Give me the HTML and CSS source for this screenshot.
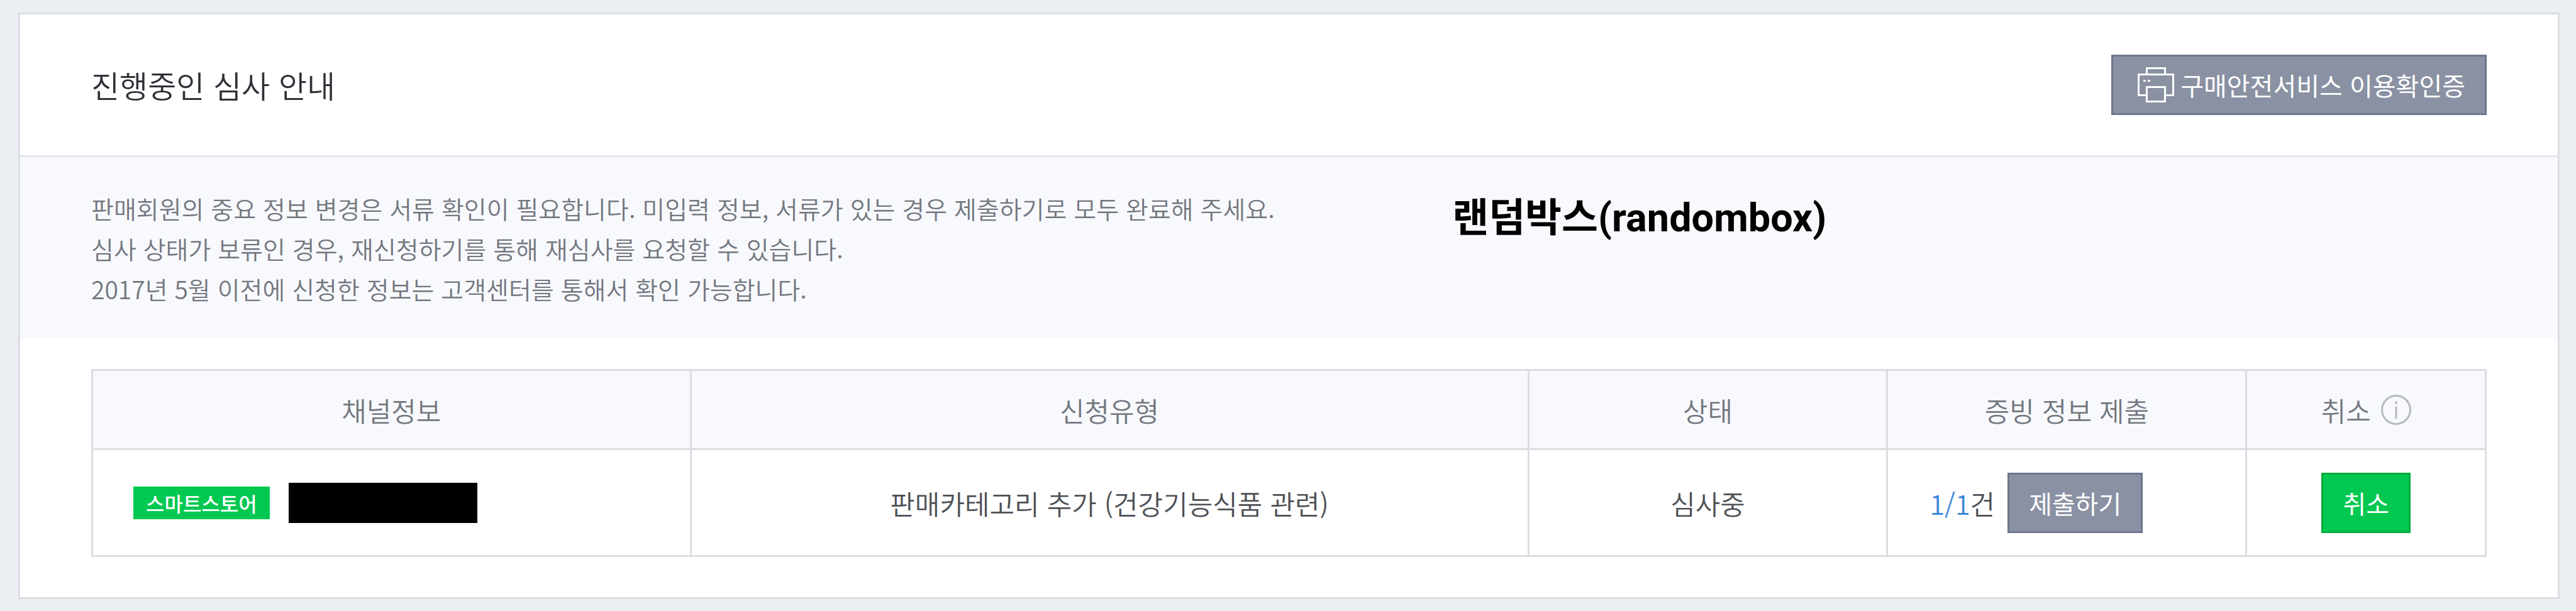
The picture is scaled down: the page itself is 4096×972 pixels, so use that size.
FILE: index.html
```html
<!DOCTYPE html>
<html lang="ko">

<head>
    <meta charset="UTF-8">
    <meta name="viewport" content="width=device-width, initial-scale=1.0">
    <title>진행중인 심사 안내</title>
    <link rel="stylesheet" href="styles.css">
</head>

<body>
    <main class="panel">
        <header class="panel-header">
            <h1 class="panel-title">진행중인 심사 안내</h1>
            <button type="button" class="btn btn-gray">
                <svg class="icon-print" viewBox="0 0 58 56" aria-hidden="true">
                    <path d="M14.5 11.500V1.500H43.500V11.500M14.500 44.500H1.500V11.500H56.500V44.500H43.500M14.500 31.500H43.500V54.500H14.500Z" />
                    <path d="M9 21.500H13M16 21.500H20" />
                </svg>
                구매안전서비스 이용확인증
            </button>
        </header>

        <section class="info">
            <div class="info-text">
                <p>판매회원의 중요 정보 변경은 서류 확인이 필요합니다. 미입력 정보, 서류가 있는 경우 제출하기로 모두 완료해 주세요.</p>
                <p>심사 상태가 보류인 경우, 재신청하기를 통해 재심사를 요청할 수 있습니다.</p>
                <p>2017년 5월 이전에 신청한 정보는 고객센터를 통해서 확인 가능합니다.</p>
            </div>
            <strong class="info-note">랜덤박스(randombox)</strong>
        </section>

        <div class="table-wrap">
            <table class="review-table">
                <colgroup>
                    <col class="col-channel">
                    <col class="col-type">
                    <col class="col-status">
                    <col class="col-submit">
                    <col class="col-cancel">
                </colgroup>
                <thead>
                    <tr>
                        <th scope="col">채널정보</th>
                        <th scope="col">신청유형</th>
                        <th scope="col">상태</th>
                        <th scope="col">증빙 정보 제출</th>
                        <th scope="col">
                            <div class="th-help">
                                취소
                                <svg class="icon-info" viewBox="0 0 48 48" aria-hidden="true">
                                    <circle cx="24" cy="24" r="22.500" />
                                    <path d="M24 10V15M24 19V38" />
                                </svg>
                            </div>
                        </th>
                    </tr>
                </thead>
                <tbody>
                    <tr>
                        <td>
                            <div class="channel">
                                <span class="badge">스마트스토어</span>
                                <span class="masked"></span>
                            </div>
                        </td>
                        <td>판매카테고리 추가 (건강기능식품 관련)</td>
                        <td>심사중</td>
                        <td>
                            <div class="submit">
                                <span><span class="count">1/1</span>건</span>
                                <button type="button" class="btn btn-gray">제출하기</button>
                            </div>
                        </td>
                        <td><button type="button" class="btn btn-green">취소</button></td>
                    </tr>
                </tbody>
            </table>
        </div>
    </main>
</body>

</html>
```

FILE: styles.css
```css
* {
    margin: 0;
    padding: 0;
    box-sizing: border-box;
}

body {
    font-family: "Noto Sans CJK KR", sans-serif;
    font-size: 43px;
    font-weight: 400;
    background: #ebeff4;
    color: #4d5055;
    padding: 20px 26px 20px 29px;
}

.panel {
    background: #fff;
    border: 3px solid #dbdde2;
}

.panel-header {
    display: flex;
    justify-content: space-between;
    align-items: center;
    padding: 64px 113px;
    border-bottom: 3px solid #e1e5ec;
}

.panel-title {
    font-size: 49px;
    font-weight: 350;
    line-height: 64px;
    color: #303038;
}

.btn {
    display: inline-flex;
    align-items: center;
    height: 96px;
    padding: 0 31px;
    border: 3px solid;
    font-family: inherit;
    font-size: 40px;
    font-weight: 400;
    color: #fff;
    white-space: nowrap;
    cursor: pointer;
}

.btn-gray {
    background: #8a91a3;
    border-color: #6d768d;
}

.btn-green {
    background: #00c850;
    border-color: #00ab3e;
}

.icon-print {
    width: 58px;
    height: 56px;
    margin: 0 10px 0 8px;
    fill: none;
    stroke: #fff;
    stroke-width: 3;
}

.info {
    display: grid;
    grid-template-columns: 25fr 19fr;
    padding: 49px 113px 48px;
    background: #f8f9fd;
}

.info-text {
    font-size: 39px;
    font-weight: 350;
    line-height: 64px;
    color: #73777f;
}

.info-note {
    font-family: Roboto, "Noto Sans CJK KR", sans-serif;
    font-size: 63px;
    font-weight: 700;
    line-height: 96px;
    color: #000;
}

.table-wrap {
    padding: 48px 113px 64px;
}

.review-table {
    width: 100%;
    table-layout: fixed;
    border-collapse: collapse;
    font-weight: 350;
    line-height: 64px;
}

.col-channel {
    width: 25%;
}

.col-type {
    width: 35%;
}

.col-status,
.col-submit {
    width: 15%;
}

.col-cancel {
    width: 10%;
}

.review-table th,
.review-table td {
    border: 3px solid #dbdde2;
    text-align: center;
    vertical-align: middle;
}

.review-table th {
    height: 126px;
    background: #f8f9fd;
    font-weight: 350;
    color: #73777f;
}

.review-table td {
    height: 170px;
}

.th-help {
    display: flex;
    justify-content: center;
    align-items: center;
    gap: 16px;
}

.icon-info {
    width: 48px;
    height: 48px;
    fill: none;
    stroke: #b5b8c3;
    stroke-width: 3;
}

.channel {
    display: flex;
    align-items: center;
    gap: 30px;
    padding-left: 64px;
}

.badge {
    padding: 0 20px;
    background: #00c850;
    font-size: 32px;
    font-weight: 500;
    line-height: 52px;
    color: #fff;
}

.masked {
    width: 300px;
    height: 64px;
    background: #000;
}

.submit {
    display: flex;
    align-items: center;
    gap: 20px;
    padding-left: 66px;
}

.count {
    color: #3d85d9;
}
```
